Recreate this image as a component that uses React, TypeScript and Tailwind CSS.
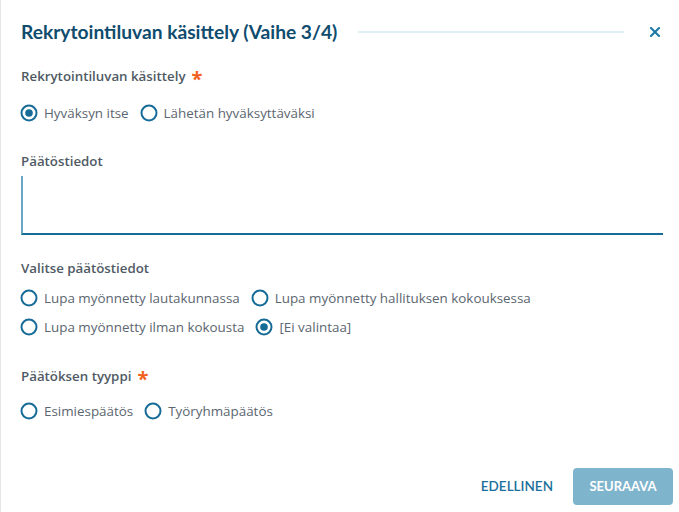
import React from "react";

const BODY = { fontFamily: '"Open Sans", "Noto Sans", sans-serif' };
const HEAD = { fontFamily: 'Lato, "Open Sans", sans-serif' };

function Radio({ label, checked }: { label: string; checked?: boolean }) {
  return (
    <div className="flex items-center">
      <svg width="18" height="18" viewBox="0 0 18 18" className="shrink-0">
        <circle cx="9" cy="9" r="7.5" fill="none" stroke="#176c97" strokeWidth="2" />
        {checked && <circle cx="9" cy="9" r="3.8" fill="#176c97" />}
      </svg>
      <span className="ml-[6px] text-[13.4px] leading-[20px] text-[#5b6670]">{label}</span>
    </div>
  );
}

function Label({ text, required }: { text: string; required?: boolean }) {
  return (
    <div className="flex items-center h-[20px] text-[13.3px] font-semibold text-[#4f5a64]">
      <span>{text}</span>
      {required && <span className="ml-[6px] text-[20px] leading-[20px] font-bold text-[#f2611d] mt-[3px]">*</span>}
    </div>
  );
}

export default function App() {
  return (
    <div className="w-[679px] h-[512px] bg-white border-l border-[#e6e6e6] flex flex-col" style={BODY}>
      <div className="flex items-center h-[64px] pl-[20px] pr-[19px]">
        <h1 className="text-[19.2px] font-bold text-[#0f4c6e] whitespace-nowrap" style={HEAD}>
          Rekrytointiluvan käsittely (Vaihe 3/4)
        </h1>
        <div className="flex-1 h-[2px] bg-[#dff0f8] ml-[21px] mr-[26px]" />
        <svg width="10" height="10" viewBox="0 0 10 10">
          <path d="M1 1 L9 9 M9 1 L1 9" stroke="#1b77a6" strokeWidth="2" strokeLinecap="square" />
        </svg>
      </div>

      <div className="pl-[20px] pr-[15px] flex flex-col">
        <div className="mt-[3px]">
          <Label text="Rekrytointiluvan käsittely" required />
        </div>
        <div className="mt-[16px] flex items-center gap-[11px] -ml-[1px]">
          <Radio label="Hyväksyn itse" checked />
          <Radio label="Lähetän hyväksyttäväksi" />
        </div>

        <div className="mt-[29px]">
          <Label text="Päätöstiedot" />
        </div>
        <div className="mt-[4px] h-[59px] w-[642px] border-l-2 border-b-2 border-l-[#6aa7c6] border-b-[#176c97]" />

        <div className="mt-[24px]">
          <Label text="Valitse päätöstiedot" />
        </div>
        <div className="mt-[9px] flex items-center gap-[11px] -ml-[1px]">
          <Radio label="Lupa myönnetty lautakunnassa" />
          <Radio label="Lupa myönnetty hallituksen kokouksessa" />
        </div>
        <div className="mt-[9px] flex items-center gap-[11px] -ml-[1px]">
          <Radio label="Lupa myönnetty ilman kokousta" />
          <Radio label="[Ei valintaa]" checked />
        </div>

        <div className="mt-[30px]">
          <Label text="Päätöksen tyyppi" required />
        </div>
        <div className="mt-[14px] flex items-center gap-[11px] -ml-[1px]">
          <Radio label="Esimiespäätös" />
          <Radio label="Työryhmäpäätös" />
        </div>
      </div>

      <div className="mt-auto flex items-center justify-end pr-[6px] pb-[7px]" style={HEAD}>
        <button className="text-[13.5px] font-semibold text-[#1b6f9c] mr-[20px]">EDELLINEN</button>
        <button className="h-[37px] w-[100px] rounded-[4px] bg-[#7fb4cd] text-white text-[13px] font-bold">
          SEURAAVA
        </button>
      </div>
    </div>
  );
}
